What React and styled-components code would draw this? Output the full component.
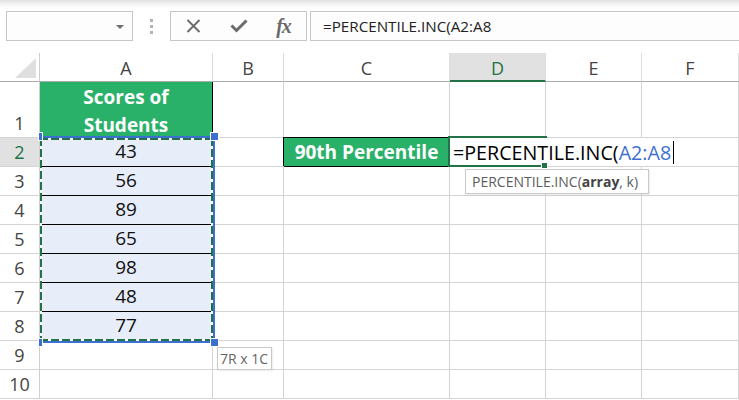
import React from "react";
import styled, { createGlobalStyle, css } from "styled-components";

const GREEN = "#217346";
const FILL = "#2ab169";
const BLUE = "#3b6fd0";
const GRID = "#d4d4d4";
const SEL = "#e8eef9";
const FONT = `"Open Sans", "Noto Sans", Arial, sans-serif`;

const Global = createGlobalStyle`
  html, body { margin: 0; padding: 0; background: #fff; }
  body { font-family: ${FONT}; overflow: hidden; }
  * { box-sizing: border-box; }
`;

const Page = styled.div`
  width: 739px;
  height: 400px;
  overflow: hidden;
  background: #fff;
`;

/* ---------- toolbar ---------- */
const Toolbar = styled.div`
  height: 53px;
  display: flex;
  align-items: flex-start;
  padding: 11px 0 0 6px;
  background: linear-gradient(to bottom, #e2e2e2 0, #f6f6f6 5px, #fff 9px);
`;

const Box = styled.div`
  height: 30px;
  border: 1px solid #c6c6c6;
  background: #fdfdfd;
  display: flex;
  align-items: center;
`;

const NameBox = styled(Box)`
  width: 127px;
  justify-content: flex-end;
  padding-right: 8px;
`;

const Caret = styled.span`
  width: 0;
  height: 0;
  border-left: 4px solid transparent;
  border-right: 4px solid transparent;
  border-top: 4px solid #6d6d6d;
  margin-top: 1px;
`;

const Grip = styled.div`
  width: 37px;
  height: 30px;
  display: flex;
  flex-direction: column;
  align-items: flex-start;
  padding: 8px 0 0 17px;
  gap: 3px;
`;

const Dot = styled.span`
  width: 3px;
  height: 3px;
  background: #b3b3b3;
`;

const FxBox = styled(Box)`
  width: 137px;
  padding-left: 0;
`;

const FxIcon = styled.span`
  width: 45px;
  display: flex;
  align-items: center;
  justify-content: center;
  color: #6a6a6a;
`;

const FxText = styled.span`
  font-family: "Liberation Serif", "DejaVu Serif", serif;
  font-style: italic;
  font-weight: 700;
  font-size: 20px;
  color: #6a6a6a;
  line-height: 1;
  letter-spacing: -1px;
  margin-top: -1px;
`;

const FormulaInput = styled(Box)`
  flex: 1;
  margin-left: 3px;
  margin-right: -2px;
  padding-left: 12px;
  font-size: 15.2px;
  color: #222;
  white-space: nowrap;
`;

/* ---------- sheet ---------- */
const Sheet = styled.div`
  position: relative;
  display: grid;
  grid-template-columns: 40px 173px 71px 166px 96px 96px 97px;
  grid-template-rows: 29px 56px repeat(9, 29px);
`;

const Corner = styled.div`
  position: relative;
  border-right: 1px solid #cfcfcf;
  border-bottom: 1px solid #ababab;
  &::after {
    content: "";
    position: absolute;
    right: 3px;
    bottom: 3px;
    width: 0;
    height: 0;
    border-left: 21px solid transparent;
    border-bottom: 20px solid #dfdfdf;
  }
`;

const ColHeader = styled.div`
  display: flex;
  align-items: center;
  justify-content: center;
  font-size: 18px;
  color: #444;
  border-right: 1px solid #dedede;
  border-bottom: 1px solid #ababab;
  padding-top: 1px;
  ${(p) =>
    p.$active &&
    css`
      background: #e1e1e1;
      color: ${GREEN};
      border-bottom: 2px solid ${GREEN};
      padding-top: 2px;
    `}
`;

const RowHeader = styled.div`
  display: flex;
  align-items: flex-end;
  justify-content: center;
  padding-bottom: 1px;
  font-size: 18px;
  line-height: 26px;
  color: #444;
  border-right: 1px solid #cfcfcf;
  border-bottom: 1px solid ${GRID};
  ${(p) =>
    p.$active &&
    css`
      background: #e1e1e1;
      color: ${GREEN};
    `}
`;

const Cell = styled.div`
  position: relative;
  display: flex;
  align-items: flex-end;
  justify-content: center;
  padding-bottom: 1px;
  font-size: 19px;
  line-height: 27px;
  color: #111;
  border-right: 1px solid ${GRID};
  border-bottom: 1px solid ${GRID};
  ${(p) =>
    p.$kind === "title" &&
    css`
      background: ${FILL};
      color: #fff;
      font-weight: 700;
      text-align: center;
      line-height: 28px;
      border-right-color: #000;
      border-bottom-color: #000;
      padding-bottom: 0;
      margin-bottom: -2px;
    `}
  ${(p) =>
    p.$kind === "data" &&
    css`
      background: ${SEL};
      border-right-color: #000;
      border-bottom-color: #000;
    `}
  ${(p) =>
    p.$kind === "label" &&
    css`
      background: ${FILL};
      color: #fff;
      font-weight: 700;
      align-items: center;
      padding-bottom: 0;
      border-right-color: #000;
      border-bottom-color: #000;
      box-shadow: -1px -1px 0 0 #000;
    `}
`;

/* ---------- overlays ---------- */
const Editor = styled.div`
  position: absolute;
  left: 450px;
  top: 85px;
  width: 287px;
  height: 28px;
  background: #fff;
  display: flex;
  align-items: center;
  padding-left: 3px;
  font-size: 19.7px;
  color: #000;
  white-space: nowrap;
  z-index: 2;
`;

const Ref = styled.span`
  color: ${BLUE};
`;

const Cursor = styled.span`
  display: inline-block;
  width: 1px;
  height: 23px;
  background: #000;
  margin-left: 2px;
`;

const ActiveBorder = styled.div`
  position: absolute;
  left: 448px;
  top: 83px;
  width: 99px;
  height: 31px;
  border: 2px solid ${GREEN};
  border-right: none;
  z-index: 3;
  &::after {
    content: "";
    position: absolute;
    right: 0;
    bottom: -3px;
    width: 5px;
    height: 5px;
    background: ${GREEN};
    box-shadow: 0 0 0 1px #fff;
  }
`;

const Marquee = styled.div`
  position: absolute;
  left: 40px;
  top: 83px;
  width: 175px;
  height: 207px;
  border: 2px solid ${BLUE};
  border-left: none;
  z-index: 3;
`;

const dashH = `repeating-linear-gradient(90deg, ${GREEN} 0 8px, #fff 8px 11px)`;
const dashV = `repeating-linear-gradient(180deg, ${GREEN} 0 8px, #fff 8px 11px)`;

const Ants = styled.div`
  width: 100%;
  height: 100%;
  background: ${dashH} top left / 100% 2px no-repeat,
    ${dashH} bottom left / 100% 2px no-repeat,
    ${dashV} top left / 2px 100% no-repeat,
    ${dashV} top right / 2px 100% no-repeat;
`;

const Handle = styled.span`
  position: absolute;
  width: ${(p) => (p.$clip ? "3px" : "7px")};
  height: 7px;
  background: ${BLUE};
  box-shadow: 0 0 0 1px #fff;
  ${(p) => (p.$right ? "right: -5px;" : "left: -1px;")}
  ${(p) => (p.$bottom ? "bottom: -5px;" : "top: -5px;")}
`;

const Tip = styled.div`
  position: absolute;
  z-index: 4;
  background: #fff;
  border: 1px solid #c8c8c8;
  box-shadow: 1px 1px 2px rgba(0, 0, 0, 0.08);
  color: #5d5d5d;
  font-size: 14px;
  white-space: nowrap;
  display: flex;
  align-items: center;
  padding: 0 5px;
`;

const FuncTip = styled(Tip)`
  left: 465px;
  top: 116px;
  width: 184px;
  height: 25px;
  padding-left: 6px;
`;

const Strong = styled.b`
  color: #444;
`;

const SizeTip = styled(Tip)`
  left: 217px;
  top: 294px;
  width: 55px;
  height: 23px;
  padding-left: 2px;
  color: #666;
`;

const CloseIcon = () => (
  <svg width="15" height="14" viewBox="0 0 15 14">
    <path d="M1.5 1 L13.5 13 M13.5 1 L1.5 13" stroke="#6a6a6a" strokeWidth="1.9" fill="none" />
  </svg>
);

const CheckIcon = () => (
  <svg width="18" height="14" viewBox="0 0 18 14">
    <path d="M1.5 6.5 L6.5 11.5 L16.5 1.5" stroke="#6a6a6a" strokeWidth="3" fill="none" />
  </svg>
);

const cols = ["A", "B", "C", "D", "E", "F"];
const scores = [43, 56, 89, 65, 98, 48, 77];

export default function App() {
  const rows = [];
  for (let r = 1; r <= 10; r++) {
    rows.push(
      <RowHeader key={`h${r}`} $active={r === 2}>
        {r}
      </RowHeader>
    );
    cols.forEach((c) => {
      const key = `${c}${r}`;
      if (c === "A" && r === 1) {
        rows.push(
          <Cell key={key} $kind="title">
            Scores of
            <br />
            Students
          </Cell>
        );
      } else if (c === "A" && r >= 2 && r <= 8) {
        rows.push(
          <Cell key={key} $kind="data">
            {scores[r - 2]}
          </Cell>
        );
      } else if (c === "C" && r === 2) {
        rows.push(
          <Cell key={key} $kind="label">
            90th Percentile
          </Cell>
        );
      } else {
        rows.push(<Cell key={key} />);
      }
    });
  }

  return (
    <Page>
      <Global />
      <Toolbar>
        <NameBox>
          <Caret />
        </NameBox>
        <Grip>
          <Dot />
          <Dot />
          <Dot />
        </Grip>
        <FxBox>
          <FxIcon>
            <CloseIcon />
          </FxIcon>
          <FxIcon>
            <CheckIcon />
          </FxIcon>
          <FxIcon>
            <FxText>fx</FxText>
          </FxIcon>
        </FxBox>
        <FormulaInput>=PERCENTILE.INC(A2:A8</FormulaInput>
      </Toolbar>
      <Sheet>
        <Corner />
        {cols.map((c) => (
          <ColHeader key={c} $active={c === "D"}>
            {c}
          </ColHeader>
        ))}
        {rows}
        <Marquee>
          <Ants />
          <Handle $clip />
          <Handle $right />
          <Handle $clip $bottom />
          <Handle $right $bottom />
        </Marquee>
        <Editor>
          =PERCENTILE.INC(<Ref>A2:A8</Ref>
          <Cursor />
        </Editor>
        <ActiveBorder />
        <FuncTip>
          PERCENTILE.INC(<Strong>array</Strong>, k)
        </FuncTip>
        <SizeTip>7R x 1C</SizeTip>
      </Sheet>
    </Page>
  );
}
